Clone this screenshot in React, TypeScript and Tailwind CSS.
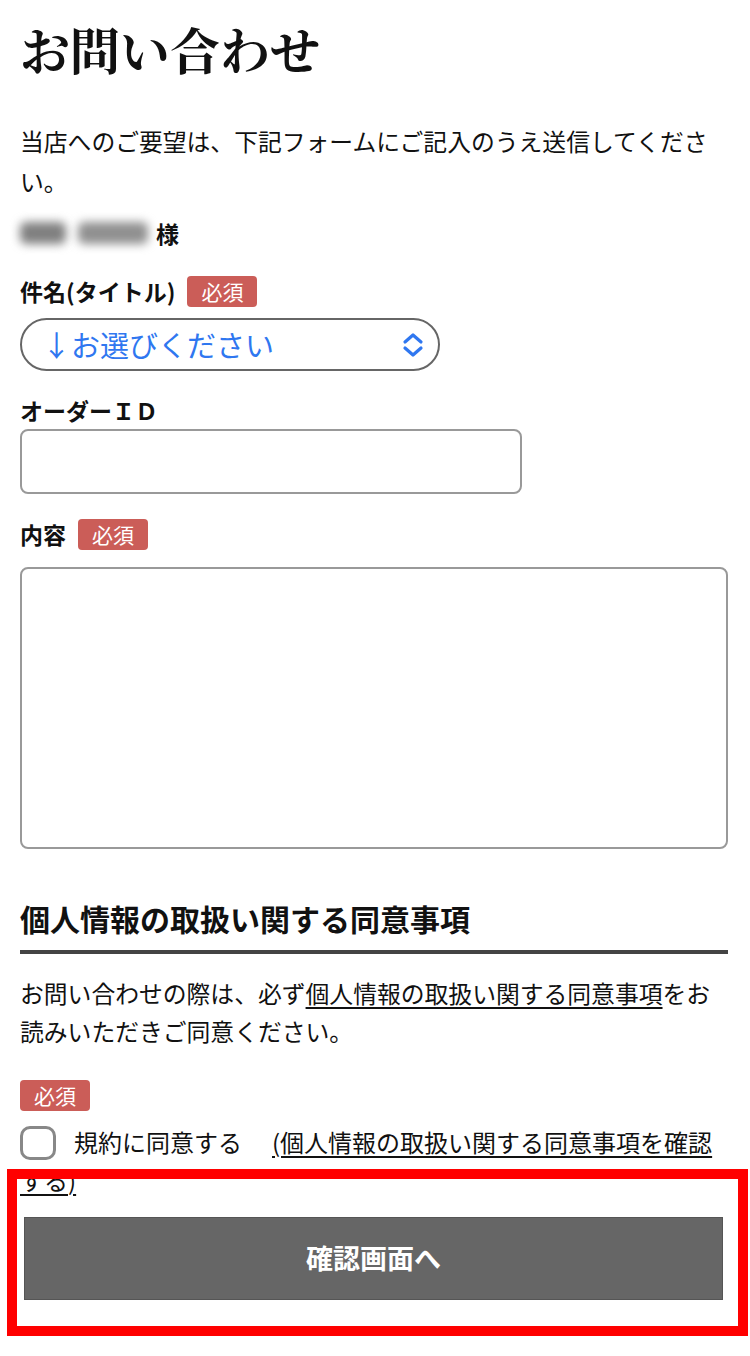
import React from "react";

const font = { fontFamily: '"Noto Sans CJK JP", "Noto Sans", sans-serif' };

function Badge({ className = "" }: { className?: string }) {
  return (
    <span
      className={`inline-flex items-center justify-center h-[31px] w-[70px] rounded-[4px] bg-[#cb5d58] text-white text-[21px] leading-none ${className}`}
    >
      必須
    </span>
  );
}

export default function App() {
  return (
    <div className="relative w-[750px] min-h-[1356px] bg-white text-[#111]" style={font}>
      <div className="px-[20px] pt-[24px]">
        <h1
          className="h-[48px] text-[50px] font-bold leading-[48px]"
          style={{ fontFamily: '"Noto Serif CJK JP", "Noto Sans CJK JP", serif' }}
        >
          お問い合わせ
        </h1>

        <p className="mt-[49px] text-[23.8px] leading-[40px]">
          当店へのご要望は、下記フォームにご記入のうえ送信してください。
        </p>

        <div className="mt-[12px] flex items-center h-[40px]">
          <span className="inline-block h-[22px] w-[46px] rounded-[6px] bg-[#808080] blur-[5px]" />
          <span className="ml-[12px] inline-block h-[22px] w-[70px] rounded-[6px] bg-[#909090] blur-[5px]" />
          <span className="ml-[8px] text-[23px] font-bold">様</span>
        </div>

        <div className="mt-[23px] flex items-center h-[30px]">
          <span className="text-[23px] font-bold leading-[30px]">件名(タイトル)</span>
          <Badge className="ml-[12px]" />
        </div>

        <div className="mt-[12px] flex items-center h-[53px] w-[420px] rounded-full border-2 border-[#666] pl-[20px] pr-[14px] text-[#2f77f0]">
          <span className="text-[29px] leading-none">↓お選びください</span>
          <svg className="ml-auto" width="22" height="26" viewBox="0 0 22 26" fill="none">
            <path d="M3 10 L11 3 L19 10" stroke="#2f77f0" strokeWidth="3.2" strokeLinecap="round" strokeLinejoin="round" />
            <path d="M3 16 L11 23 L19 16" stroke="#2f77f0" strokeWidth="3.2" strokeLinecap="round" strokeLinejoin="round" />
          </svg>
        </div>

        <div className="mt-[24px] h-[30px] text-[23px] font-bold leading-[30px]">オーダーＩＤ</div>
        <div className="mt-[4px] h-[65px] w-[502px] rounded-[8px] border-2 border-[#999]" />

        <div className="mt-[25px] flex items-center h-[30px]">
          <span className="text-[23px] font-bold leading-[30px]">内容</span>
          <Badge className="ml-[12px]" />
        </div>
        <div className="mt-[18px] h-[282px] w-[708px] rounded-[8px] border-2 border-[#999]" />

        <h2 className="mt-[49px] text-[30px] font-bold leading-[40px]">個人情報の取扱い関する同意事項</h2>
        <div className="mt-[12px] h-[4px] w-[708px] bg-[#444]" />

        <p className="mt-[20px] text-[23.8px] leading-[38px]">
          お問い合わせの際は、必ず<span className="underline underline-offset-[4px]">個人情報の取扱い関する同意事項</span>をお読みいただきご同意ください。
        </p>

        <div className="mt-[30px] h-[31px]">
          <Badge />
        </div>

        <p className="mt-[12px] w-[706px] text-[24px] leading-[38px]">
          <span className="inline-block align-middle h-[34px] w-[36px] rounded-[10px] border-[3px] border-[#888] -mt-[4px]" />
          <span className="ml-[18px]">規約に同意する</span>
          <span className="ml-[30px] underline underline-offset-[4px]">(個人情報の取扱い関する同意事項を確認する)</span>
        </p>

        <button className="mt-[18px] ml-[4px] flex h-[83px] w-[699px] items-center justify-center border border-[#555] bg-[#666] text-[27px] font-bold text-white">
          確認画面へ
        </button>
      </div>

      <div className="absolute left-[7px] top-[1169px] h-[167px] w-[741px] border-[10px] border-[#ff0000] pointer-events-none" />
    </div>
  );
}
